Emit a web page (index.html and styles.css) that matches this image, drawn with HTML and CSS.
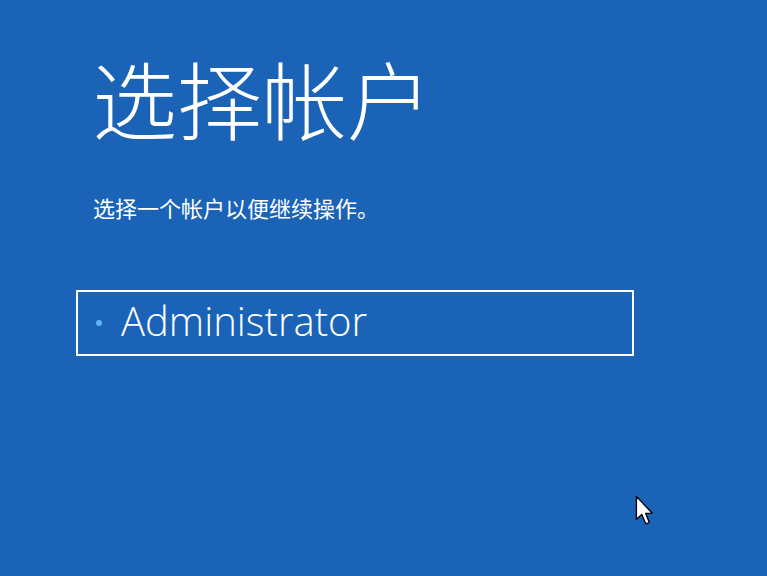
FILE: index.html
```html
<!DOCTYPE html>
<html lang="zh-CN">
<head>
    <meta charset="UTF-8">
    <meta name="viewport" content="width=device-width, initial-scale=1.0">
    <title>选择帐户</title>
    <link rel="stylesheet" href="styles.css">
</head>
<body>
    <main class="screen">
        <h1 class="title">选择帐户</h1>
        <p class="subtitle">选择一个帐户以便继续操作。</p>

        <div class="account-list">
            <div class="account">
                <span class="dot"></span>
                <span class="name">Administrator</span>
            </div>
        </div>
    </main>

    <!-- mouse pointer -->
    <svg class="cursor" width="19" height="31" viewBox="0 0 14 23">
        <path d="M1 1 L1 18 L5 14.5 L8 21.5 L10.6 20.4 L7.8 13.6 L12.6 13.4 Z" fill="#fff" stroke="#000" stroke-width="1" stroke-linejoin="round"/>
    </svg>
</body>
</html>
```

FILE: styles.css
```css
html, body {
    margin: 0;
    padding: 0;
    height: 100%;
}

body {
    background-color: #1b63b6;
    color: #fff;
    font-family: "Noto Sans CJK SC", "Open Sans", sans-serif;
    overflow: hidden;
    position: relative;
}

.screen {
    padding: 50px 0 0 76px;
}

.title {
    margin: 0 0 0 16px;
    font-size: 85px;
    font-weight: 300;
    line-height: 1.1;
}

.subtitle {
    margin: 50px 0 0 17px;
    font-size: 22px;
    font-weight: 400;
    line-height: 1.2;
}

.account-list {
    margin-top: 70px;
}

.account {
    width: 554px;
    height: 62px;
    border: 2px solid #fff;
    display: flex;
    align-items: center;
}

.dot {
    width: 6px;
    height: 6px;
    border-radius: 50%;
    background-color: #5cb6f2;
    margin-left: 18px;
}

.name {
    margin-left: 19px;
    font-family: "Open Sans", sans-serif;
    font-size: 40px;
    font-weight: 300;
    line-height: 1;
    padding-bottom: 4px;
}

.cursor {
    position: absolute;
    left: 635px;
    top: 495px;
}
```
